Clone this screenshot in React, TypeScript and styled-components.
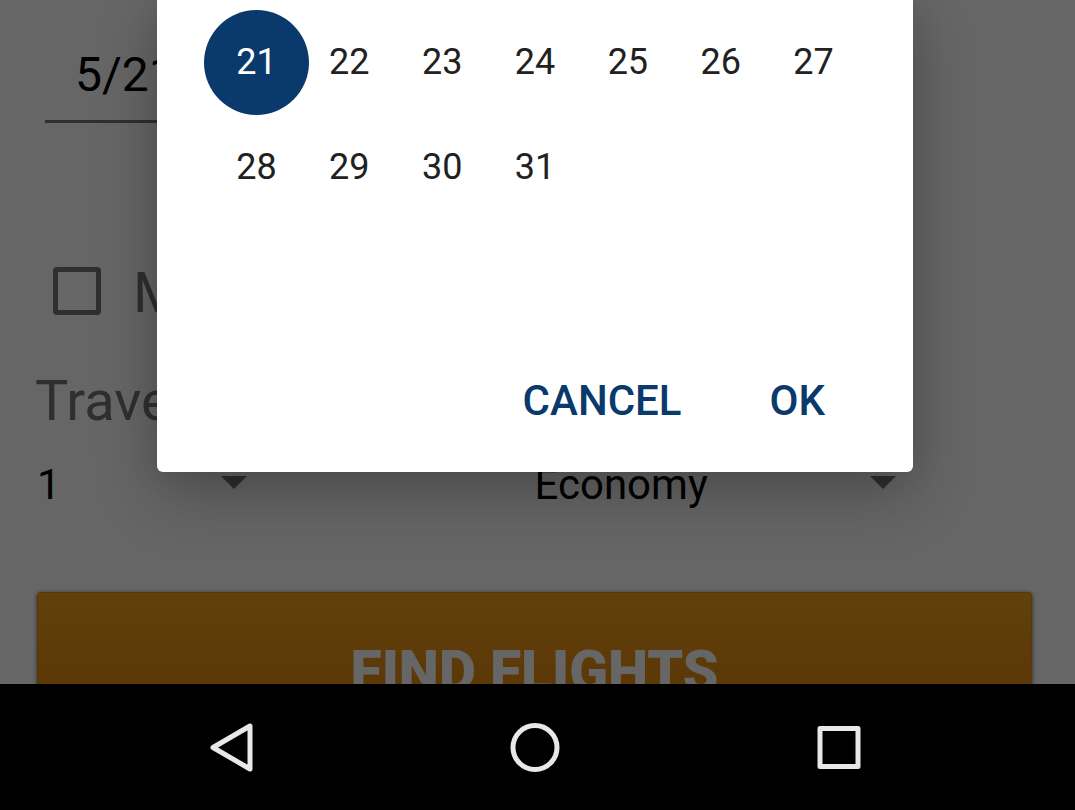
import React, { useState } from "react";
import styled, { createGlobalStyle } from "styled-components";

const GlobalStyle = createGlobalStyle`
  *, *::before, *::after { box-sizing: border-box; }
  body { margin: 0; background: #000; font-family: Roboto, sans-serif; }
  button, input, select { font-family: inherit; margin: 0; }
`;

const Phone = styled.div`
  display: flex;
  flex-direction: column;
  height: 100vh;
`;

const Screen = styled.div`
  position: relative;
  flex: 1;
  min-height: 0;
  overflow: hidden;
  background: #fff;
`;

const SearchForm = styled.form`
  display: flex;
  flex-direction: column;
  padding: 0 43px 0 37px;
`;

const DateField = styled.input`
  width: 40%;
  height: 123px;
  margin-left: 8px;
  padding: 45px 0 17px 30px;
  border: 0;
  border-bottom: 3px solid #757575;
  border-radius: 0;
  background: transparent;
  color: #000;
  font-size: 48px;
  line-height: 56px;
`;

const CheckRow = styled.label`
  display: flex;
  align-items: center;
  gap: 32px;
  margin: 134px 0 0 16px;
  color: #757575;
  font-size: 56px;
  line-height: 64px;
`;

const CheckBox = styled.input`
  appearance: none;
  width: 48px;
  height: 48px;
  border: 5px solid #757575;
  border-radius: 4px;
  &:checked { background: #757575; }
`;

const CheckText = styled.span`
  padding-top: 4px;
`;

const Heading = styled.h2`
  margin: 44px 0 0 -2px;
  color: #757575;
  font-size: 56px;
  font-weight: 400;
  line-height: 64px;
`;

const SelectRow = styled.div`
  display: grid;
  grid-template-columns: 1fr 1fr;
  margin-top: 24px;
`;

const SelectBox = styled.div<{ $width: string }>`
  display: grid;
  align-items: center;
  width: ${(p) => p.$width};
`;

const Select = styled.select`
  grid-area: 1 / 1;
  appearance: none;
  width: 100%;
  height: 56px;
  padding: 0;
  border: 0;
  background: transparent;
  color: #000;
  font-size: 42px;
  line-height: 56px;
`;

const Caret = styled.svg`
  grid-area: 1 / 1;
  justify-self: end;
  width: 26px;
  height: 13px;
  margin-bottom: 6px;
  fill: #757575;
  pointer-events: none;
`;

const FindButton = styled.button`
  height: 160px;
  margin-top: 79px;
  padding: 0;
  border: 1px solid #e08a1c;
  border-radius: 3px;
  background: linear-gradient(#f3a21c, #e48b12 60%, #e08510);
  box-shadow: 0 1px 4px rgba(0, 0, 0, 0.6);
  color: #fff;
  font-size: 57px;
  font-weight: 900;
  line-height: 64px;
`;

const Scrim = styled.div`
  position: absolute;
  inset: 0;
  display: flex;
  align-items: flex-start;
  padding: 0 162px 0 157px;
  background: rgba(0, 0, 0, 0.6);
`;

const Dialog = styled.section`
  flex: 1;
  border-radius: 0 0 6px 6px;
  background: #fff;
  box-shadow:
    0 24px 64px rgba(0, 0, 0, 0.24),
    0 0 32px rgba(0, 0, 0, 0.1);
`;

const Calendar = styled.table`
  width: 100%;
  padding: 10px 53px 0;
  border-collapse: separate;
  border-spacing: 0;
  table-layout: fixed;
`;

const DayCell = styled.td`
  height: 105px;
  padding: 0;
`;

const Day = styled.button<{ $selected: boolean }>`
  display: block;
  width: 105px;
  height: 105px;
  margin: 0 -6px;
  padding: 0 0 2px;
  border: 0;
  border-radius: 50%;
  background: ${(p) => (p.$selected ? "#0a3a6b" : "transparent")};
  color: ${(p) => (p.$selected ? "#fff" : "#212121")};
  font-size: 36px;
  line-height: 40px;
`;

const Actions = styled.div`
  display: flex;
  justify-content: flex-end;
  gap: 40px;
  padding: 133px 64px 23px;
`;

const Action = styled.button`
  height: 96px;
  padding: 0 24px;
  border: 0;
  background: transparent;
  color: #0a3a6b;
  font-size: 42px;
  font-weight: 500;
  line-height: 48px;
`;

const NavBar = styled.nav`
  display: flex;
  justify-content: center;
  gap: 240px;
  align-items: center;
  height: 126px;
  padding-right: 5px;
  background: #000;
`;

const NavButton = styled.button`
  display: flex;
  padding: 6px;
  border: 0;
  background: transparent;
`;

const NavIcon = styled.svg`
  width: 52px;
  height: 52px;
  fill: none;
  stroke: #e8e8e8;
  stroke-width: 5;
  stroke-linejoin: round;
`;

const weeks = [
  [21, 22, 23, 24, 25, 26, 27],
  [28, 29, 30, 31],
];

function DropDown({ label, options, width }: { label: string; options: string[]; width: string }) {
  return (
    <SelectBox $width={width}>
      <Select aria-label={label}>
        {options.map((o) => (
          <option key={o}>{o}</option>
        ))}
      </Select>
      <Caret viewBox="0 0 26 13" aria-hidden="true">
        <path d="M0 0H26L13 13Z" />
      </Caret>
    </SelectBox>
  );
}

export default function App() {
  const [day, setDay] = useState(21);
  return (
    <Phone>
      <GlobalStyle />
      <Screen>
        <SearchForm onSubmit={(e) => e.preventDefault()}>
          <DateField aria-label="Departure date" value={`5/${day}/2017`} readOnly />
          <CheckRow>
            <CheckBox type="checkbox" />
            <CheckText>My dates are flexible</CheckText>
          </CheckRow>
          <Heading>Travelers</Heading>
          <SelectRow>
            <DropDown label="Travelers" options={["1", "2", "3", "4"]} width="210px" />
            <DropDown label="Cabin" options={["Economy", "Business", "First"]} width="361px" />
          </SelectRow>
          <FindButton type="submit">FIND FLIGHTS</FindButton>
        </SearchForm>
        <Scrim>
          <Dialog role="dialog" aria-label="Choose a date">
            <Calendar>
              <tbody>
                {weeks.map((week) => (
                  <tr key={week[0]}>
                    {week.map((d) => (
                      <DayCell key={d}>
                        <Day type="button" $selected={d === day} onClick={() => setDay(d)}>
                          {d}
                        </Day>
                      </DayCell>
                    ))}
                  </tr>
                ))}
              </tbody>
            </Calendar>
            <Actions>
              <Action type="button">CANCEL</Action>
              <Action type="button">OK</Action>
            </Actions>
          </Dialog>
        </Scrim>
      </Screen>
      <NavBar aria-label="System navigation">
        <NavButton type="button" aria-label="Back">
          <NavIcon viewBox="0 0 52 52">
            <path d="M45 5V48L8 26.500Z" />
          </NavIcon>
        </NavButton>
        <NavButton type="button" aria-label="Home">
          <NavIcon viewBox="0 0 52 52">
            <circle cx="26" cy="26.500" r="22" />
          </NavIcon>
        </NavButton>
        <NavButton type="button" aria-label="Recent apps">
          <NavIcon viewBox="0 0 52 52">
            <rect x="7" y="7.500" width="38" height="38" />
          </NavIcon>
        </NavButton>
      </NavBar>
    </Phone>
  );
}
